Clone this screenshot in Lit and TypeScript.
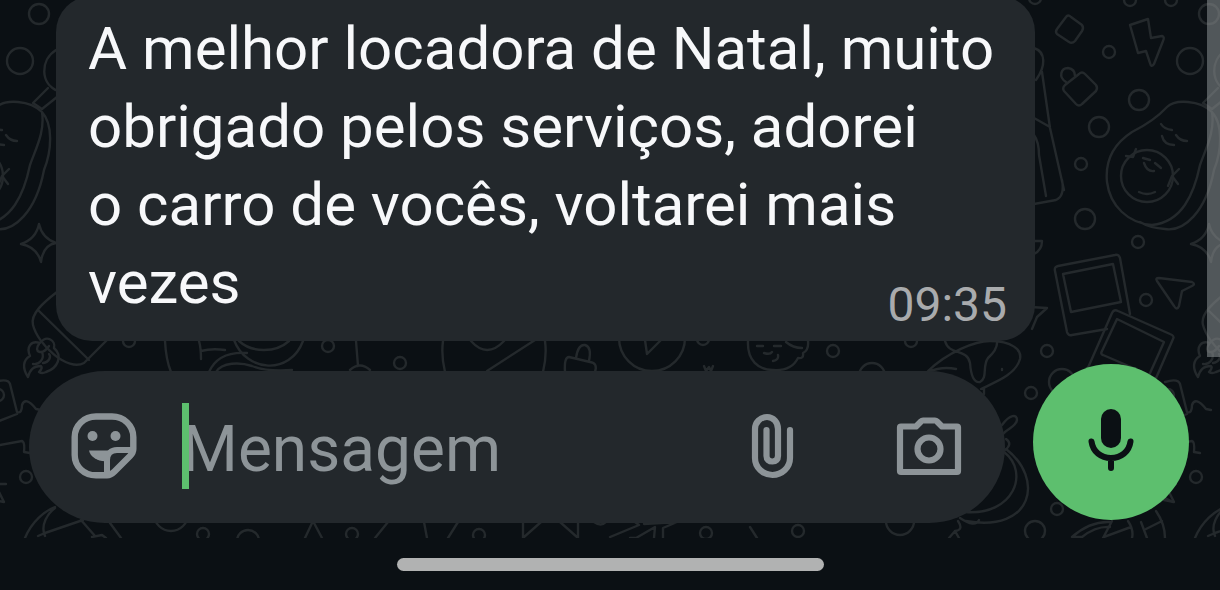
import { LitElement, html, css, svg } from "lit";
import { customElement, property } from "lit/decorators.js";

type Dot = [number, number, number];

// Rings scattered over the wallpaper: centre x, centre y, radius.
const RINGS: Dot[] = [
  [1035, -2, 6], [1130, 0, 6], [1171, 0, 6], [1109, 52, 6], [1139, 100, 10],
  [1099, 127, 10], [1081, 164, 6], [1085, 219, 10], [1138, 242, 6], [1146, 300, 6],
  [1047, 351, 6], [1031, 393, 6], [1057, 509, 6], [1035, 531, 10], [1062, 382, 13],
  [129, 341, 6], [328, 346, 6], [400, 363, 6], [703, 339, 6], [833, 351, 6],
  [911, 341, 6], [872, 376, 13], [203, 534, 6], [352, 534, 6], [479, 535, 6],
  [706, 533, 6], [798, 531, 6], [900, 521, 14], [171, 514, 17], [248, 541, 11],
  [652, 338, 33],
];

// Rings near the seam, drawn once per repeat of the tile.
const SEAM_RINGS: Dot[] = [[39, 14, 10], [20, 61, 13], [26, 477, 6], [-2, 395, 6], [-23, 176, 26]];

const DOODLES = [
  // dice, bolt, jar with its ring
  "M1066 17Q1068 14 1071 17L1082 25Q1084 28 1082 31L1075 41Q1072 44 1069 42L1057 34Q1055 32 1057 29Z",
  "M1130 25L1148 19L1151 38L1162 36Q1165 37 1163 41L1154 64Q1151 68 1150 63L1146 51L1138 53Z",
  "M1079 74Q1082 71 1085 74L1096 85Q1098 88 1096 91L1082 104Q1079 107 1076 104L1064 91Q1062 88 1065 85Z",
  "M1066 82C1058 77 1061 68 1068 68Q1075 69 1075 76",
  // long strip next to the bubble
  "M1034 48C1046 52 1046 66 1036 80M1042 72L1050 128L1064 190M1034 118L1050 127M1034 135Q1039 142 1039 155L1046 196M1034 204L1056 200Q1065 196 1062 180",
  "M1034 241H1042Q1042 250 1034 254M1030 307L1047 308L1037 317L1032 329",
  // photo frames
  "M1107 329L1072 335Q1068 336 1067 332L1055 271Q1054 267 1058 266L1115 255Q1119 254 1120 258L1130 314",
  "M1063 274L1113 264L1121 302L1071 312Z",
  "M1087 370L1112 313Q1114 309 1118 311L1170 334Q1175 336 1173 339L1150 392",
  "M1145 373L1103 355Q1100 354 1102 351L1117 319L1164 342L1146 382",
  // paper plane
  "M1159 278L1192 282Q1196 284 1192 286L1182 291L1179 306Q1177 311 1174 306L1157 281Q1155 278 1159 278Z",
  // strip between the bubble and the message box
  "M165 341Q166 360 171 372M199 341Q201 348 201 359M201 351Q212 348 225 350M209 372C216 356 232 352 247 353M216 372C222 362 240 362 252 366Q268 372 292 370",
  "M234 340C246 372 290 376 303 341M239 341C252 353 276 353 289 341M356 341L358 366M350 370Q360 361 370 370",
  "M443 341Q441 356 445 372M545 341Q547 356 543 372M471 341Q487 359 504 341M535 340L487 371M645 340L647 354L661 340",
  "M565 372Q564 357 569 357L590 362Q598 363 595 372M576 358Q578 344 585 345Q592 347 589 361M704 366L706 371L709 367L711 371L713 366",
  "M748 341C747 360 758 370 773 370C786 371 794 366 798 358Q804 359 803 353Q809 350 808 341M757 346H763M774 346H781M764 353Q770 355 772 352M773 361Q779 360 778 355M786 342Q793 348 802 348",
  "M928 371C948 352 975 341 990 341C1012 341 1022 350 1020 359C1016 374 998 381 981 389M928 372Q942 366 956 369M945 341C949 356 967 348 970 363C971 376 974 383 980 382C988 378 982 366 988 358Q998 349 997 341M1002 369v1M984 388V394",
  // fruit beside the message box
  "M1002 425C1010 414 1017 414 1017 420C1016 427 1008 428 1003 434M1006 439Q1013 444 1005 450M1004 452C1030 472 1014 516 965 512M1006 449C1044 478 1034 533 966 521M960 518Q975 528 979 520M958 521Q964 530 955 531M955 531L949 538M955 531L959 538",
  // row below the message box
  "M305 538L313 521L322 538M375 538L388 522M424 522L427 538M448 538L458 522M523 522V538L541 522M560 522L578 538V522M594 522Q601 527 606 522M610 537L639 525L635 522M630 538H636L655 527L654 538M644 524L677 522L663 528V538M750 527L757 538",
  "M1072 537Q1090 521 1110 522M1072 537H1082Q1096 526 1110 527M1103 538L1112 521M1104 537L1131 527M1128 521Q1134 530 1132 538M1141 522L1147 538M1146 529L1162 521M1156 511Q1165 524 1165 538M1165 498L1173 502",
];

const SEAM_DOODLES = [
  // avocado with a sleeping face
  "M42 112C30 100 5 99 -3 107C-15 120 -28 127 -38 132C-58 145 -65 162 -63 182C-60 206 -42 223 -18 225C12 222 24 194 30 165C36 148 45 132 42 112C53 124 52 150 44 170C36 212 14 232 -5 229Q-20 228 -30 222",
  "M-9 124Q-6 129 2 130M6 135Q10 141 17 141M-8 136Q-6 145 4 145M-27 158L-20 160M-15 163L-9 168M-26 163Q-23 172 -16 171M-31 192Q-23 196 -15 192M-34 149L-37 157L-44 156M9 169L2 176L8 184M2 176L-2 186",
  // pear and its stem
  "M56 50C40 60 40 84 58 91M33 103L48 88M42 109L57 97M33 103L42 109",
  // sparkle
  "M39 224Q42 238 56 243Q43 245 41 262Q37 247 21 244Q36 239 39 224Z",
  // rocket with flame
  "M57 292C44 302 30 314 33 325C38 345 68 372 84 363L107 340M38 310L89 360",
  "M28 377C22 368 23 360 30 356C26 347 31 340 40 343C47 334 56 341 54 348C63 356 58 368 46 372Q42 374 39 372Q43 368 41 366C33 366 30 370 28 377M39 344C33 352 42 356 49 346M33 364C39 365 45 359 42 352M43 363C50 362 51 356 49 354",
  // puzzle piece and fish
  "M-5 382Q8 378 10 384L17 412Q22 414 22 405C24 399 29 400 36 409L41 410M-6 423L17 414M-6 446L22 441Q25 442 24 452L30 453M-6 484H6M-6 500L4 502L-2 490",
  // flower
  "M25 538C32 521 45 511 55 507M45 536C40 525 48 513 55 508M38 536L45 533L83 520M81 520L95 536M92 537L102 535L106 538M110 523L121 538",
];

const ring = ([x, y, r]: Dot) => svg`<circle cx=${x} cy=${y} r=${r}></circle>`;
const stroke = (d: string) => svg`<path d=${d}></path>`;
const seam = () => svg`${SEAM_RINGS.map(ring)}${SEAM_DOODLES.map(stroke)}`;

@customElement("chat-wallpaper")
export class ChatWallpaper extends LitElement {
  static styles = css`
    :host { display: block; overflow: hidden; }
    .art {
      display: block; width: 100%; height: 100%;
      fill: none; stroke: #24292c; stroke-width: 2.4;
      stroke-linecap: round; stroke-linejoin: round;
    }
  `;
  render() {
    return html`
      <svg class="art" viewBox="0 0 1220 538" preserveAspectRatio="xMidYMid slice" aria-hidden="true">
        ${RINGS.map(ring)}${DOODLES.map(stroke)}
        <g>${seam()}</g>
        <g transform="translate(1170 0)">${seam()}</g>
      </svg>
    `;
  }
}

@customElement("chat-message")
export class ChatMessage extends LitElement {
  @property() text = "";
  @property() time = "";
  static styles = css`
    :host { display: block; }
    .bubble {
      padding: 14px 28px 12px 32px;
      border-radius: 36px;
      background: #23282c;
    }
    .text { display: flow-root; margin: 0; font-size: 60px; line-height: 78px; color: #f7f8fa; }
    .time { float: right; margin-top: 37px; font-size: 48px; line-height: 48px; color: #a9abad; }
  `;
  render() {
    return html`
      <article class="bubble">
        <p class="text">${this.text}<time class="time">${this.time}</time></p>
      </article>
    `;
  }
}

@customElement("chat-composer")
export class ChatComposer extends LitElement {
  static styles = css`
    :host { display: flex; align-items: flex-end; gap: 28px; }
    .box {
      flex: 1; min-width: 0; box-sizing: border-box; height: 152px;
      display: flex; align-items: center;
      padding: 0 43px 2px 42px; border-radius: 76px; background: #23282c;
    }
    button { margin: 0; padding: 0; border: 0; background: none; cursor: pointer; }
    .tool { flex: none; width: 66px; height: 66px; color: #8d9498; }
    .camera { margin-left: 91px; }
    .icon { display: block; width: 100%; height: 100%; }
    .field { position: relative; flex: 1; min-width: 0; margin-left: 45px; }
    .input {
      display: block; width: 100%; box-sizing: border-box; height: 86px; margin: 0; padding: 6px 0 0;
      border: 0; outline: 0; background: none; color: #f7f8fa;
      font: inherit; font-size: 64px; line-height: 80px; caret-color: transparent;
    }
    .input::placeholder { color: #8d9498; opacity: 1; }
    .caret { position: absolute; top: 0; left: 0; width: 7px; height: 86px; background: #5dbf6e; }
    .mic {
      flex: none; width: 156px; height: 156px; margin-bottom: 3px;
      border-radius: 50%; background: #5dbf6e; color: #0b1014;
    }
  `;
  render() {
    return html`
      <div class="box">
        <button class="tool" type="button" aria-label="Figurinhas">
          <svg class="icon" viewBox="0 0 66 66" fill="none" stroke="currentColor" stroke-width="6.4" stroke-linejoin="round">
            <path d="M25 3.5H41C53 3.5 62.3 12.5 62.3 24V36C62.3 39 61 41 59 43L43.5 58.5C41 61 39 62.3 36 62.3H25C13 62.3 3.7 53.5 3.7 42V24C3.7 12.500 13 3.5 25 3.5Z" />
            <path d="M36 62V47C36 41 40 37 46 37H62" stroke-width="6" />
            <g fill="currentColor" stroke="none">
              <circle cx="21.5" cy="23" r="5" />
              <circle cx="44.5" cy="23" r="5" />
              <path d="M18 37.5H42L37 48C29 49.5 19.5 45 18 37.5Z" />
            </g>
          </svg>
        </button>
        <div class="field">
          <input class="input" type="text" placeholder="Mensagem" aria-label="Mensagem" />
          <span class="caret"></span>
        </div>
        <button class="tool" type="button" aria-label="Anexar">
          <svg class="icon" viewBox="0 0 66 66" fill="none" stroke="currentColor" stroke-width="6.2" stroke-linecap="round">
            <path d="M51 17V45C51 54.5 43 62 33.5 62C24 62 16 54.5 16 45V16C16 9.5 21.5 4 28 4C34.5 4 39 9.5 39 16V43C39 46.5 37 48.5 33.5 48.5C30 48.5 27.5 46.5 27.5 43V17" />
          </svg>
        </button>
        <button class="tool camera" type="button" aria-label="Câmera">
          <svg class="icon" viewBox="0 0 66 66" fill="none" stroke="currentColor" stroke-width="6.2" stroke-linejoin="round">
            <path d="M5 13.5H20L25 8.500Q26 7.500 27 7.500H39Q40 7.500 41 8.500L46 13.500H61Q62 13.500 62 14.500V58Q62 59 61 59H5Q4 59 4 58V14.500Q4 13.500 5 13.500Z" />
            <circle cx="33" cy="36" r="11.5" />
          </svg>
        </button>
      </div>
      <button class="mic" type="button" aria-label="Gravar áudio">
        <svg class="icon" viewBox="0 0 156 156" fill="none" stroke="currentColor" stroke-width="6" stroke-linecap="round">
          <rect x="68" y="45" width="20" height="39" rx="10" fill="currentColor" stroke="none" />
          <path d="M58.500 77.500C60 88 68 94 78 94C88 94 96 88 97.500 77.500M78 94V104" />
        </svg>
      </button>
    `;
  }
}

@customElement("app-root")
export class AppRoot extends LitElement {
  static styles = css`
    :host {
      display: flex; flex-direction: column; height: 100vh; overflow: hidden;
      background: #0b1014; font-family: Roboto, "Noto Sans", sans-serif;
    }
    .chat { position: relative; flex: 1; min-height: 0; display: flex; flex-direction: column; }
    .wallpaper { position: absolute; inset: 0; }
    .messages {
      position: relative; flex: 1; min-height: 0;
      display: flex; flex-direction: column; justify-content: flex-end;
      padding: 0 185px 23px 56px;
    }
    .composer { position: relative; padding: 0 31px 15px 29px; }
    .scrollbar {
      position: absolute; top: 0; right: 0; width: 13px; height: 357px;
      background: rgba(140, 145, 148, 0.55);
    }
    .system { flex: none; display: flex; align-items: center; justify-content: center; height: 52px; }
    .home { width: 35%; height: 13px; border-radius: 7px; background: #b1b2b2; }
  `;
  render() {
    return html`
      <main class="chat">
        <chat-wallpaper class="wallpaper"></chat-wallpaper>
        <section class="messages">
          <chat-message
            text=${"A melhor locadora de Natal, muito obrigado pelos serviços, adorei o\u00a0carro de vocês, voltarei mais vezes"}
            time="09:35"
          ></chat-message>
        </section>
        <chat-composer class="composer"></chat-composer>
        <div class="scrollbar"></div>
      </main>
      <footer class="system"><div class="home"></div></footer>
    `;
  }
}
